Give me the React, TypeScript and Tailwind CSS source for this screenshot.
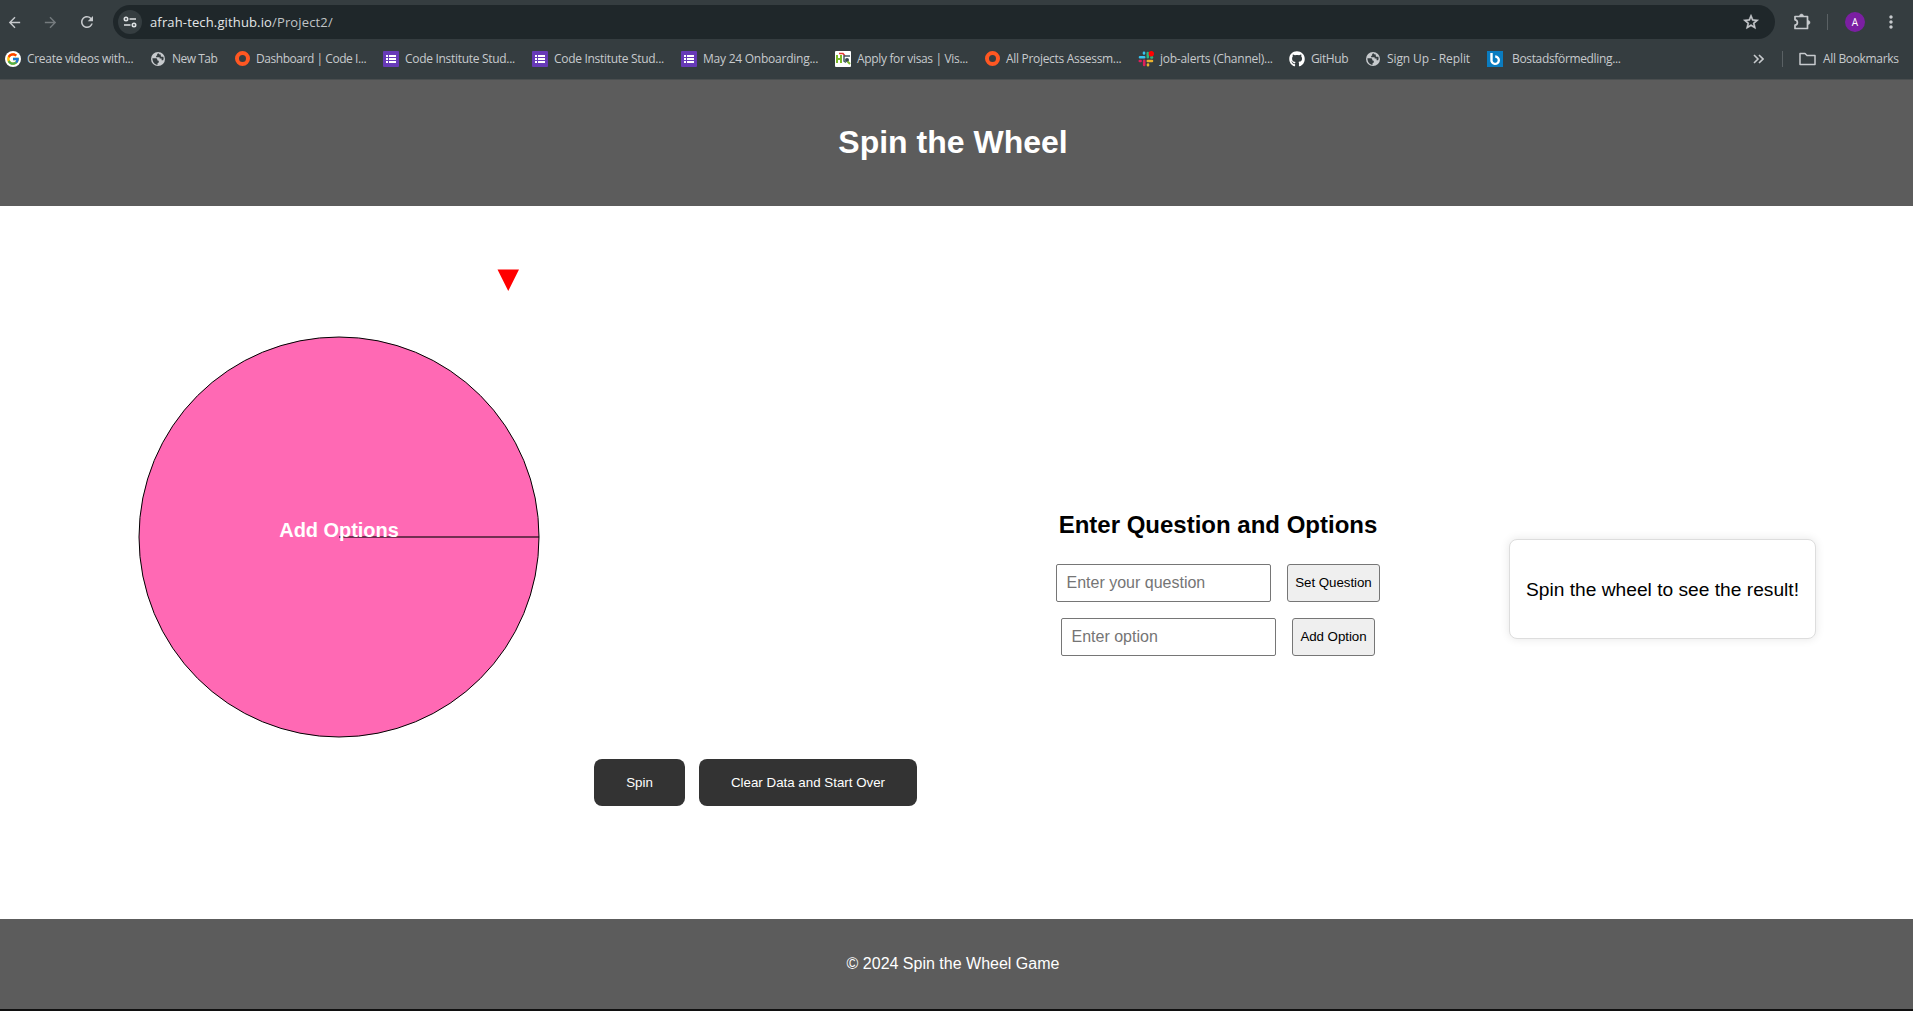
import React from "react";
import { FaGithub } from "react-icons/fa";
import { FcGoogle } from "react-icons/fc";
import { MdArrowBack, MdArrowForward, MdRefresh, MdStarOutline, MdMoreVert } from "react-icons/md";

function GoogleIcon() {
  return (
    <span className="flex h-4 w-4 items-center justify-center rounded-full bg-white">
      <FcGoogle size={14} />
    </span>
  );
}

function GlobeIcon() {
  return (
    <svg className="h-4 w-4" viewBox="0 0 16 16">
      <circle cx="8" cy="8" r="7" fill="#c7cacd" />
      <path d="M2.4 7.2h3.2c1.3 0 1.7.7 1.7 1.5s.6 1 1.5 1v1.4c0 .7-.6 1-1.2 1v1.7C4.800 13.600 2.400 11 2.400 7.200z" fill="#353d40" />
      <path d="M8.600 2.300c-.9.200-1.500.7-1.500 1.400v1h-1v1.600h3.500v1.200h2v1.800h1.500c.6-1 .7-2.500.2-3.600h-1.500c-.7 0-1-.4-1-1V3.600c-1.300 0-2-.5-2.200-1.300z" fill="#353d40" />
    </svg>
  );
}

function RingIcon() {
  return <span className="h-[15px] w-[15px] rounded-full border-4 border-[#ff5722]" />;
}

function ListIcon() {
  return (
    <svg className="h-4 w-4" viewBox="0 0 16 16">
      <rect width="16" height="16" rx="1" fill="#673ab7" />
      <path d="M3 4h2v2H3zM6 4h7v2H6zM3 7h2v2H3zM6 7h7v2H6zM3 10h2v2H3zM6 10h7v2H6z" fill="#fff" />
    </svg>
  );
}

function VisaIcon() {
  return (
    <svg className="h-4 w-4" viewBox="0 0 16 16" fill="none">
      <rect width="16" height="16" rx="1" fill="#fff" />
      <path d="M2 4v8M6 4v8M2 8h4" stroke="#7cb928" strokeWidth="2" />
      <path d="M4 2.500h4l2 2.500" stroke="#e53935" strokeWidth="1.600" />
      <path d="M15 5H9v5l2 1.500" stroke="#455a64" strokeWidth="1.500" />
      <circle cx="12" cy="9" r="2" fill="#37474f" />
      <path d="M12.500 10.500l2.500 2.500" stroke="#7cb928" strokeWidth="2" />
    </svg>
  );
}

function SlackIcon() {
  return (
    <svg className="h-4 w-4" viewBox="0 0 16 16" fill="none" strokeLinecap="round" strokeWidth="2.600">
      <path d="M2 6.200h4.200M6 1.800v.6" stroke="#36c5f0" />
      <path d="M9.800 2v4.200M14 6.400h-.6" stroke="#2eb67d" />
      <path d="M14 10h-4.200M10 14.200v-.6" stroke="#ecb22e" />
      <path d="M6.200 14v-4.200M1.800 10h.8" stroke="#e01e5a" />
      <circle cx="13.300" cy="2.800" r="2.700" fill="#f00" />
    </svg>
  );
}

function BostadIcon() {
  return (
    <svg className="h-4 w-4" viewBox="0 0 16 16" fill="none">
      <rect width="16" height="16" fill="#0a7cc0" />
      <path d="M4.500 2v6.500a3.700 3.700 0 1 0 3.700-3" stroke="#fff" strokeWidth="2.400" />
    </svg>
  );
}

const bookmarks = [
  { label: "Create videos with...", icon: <GoogleIcon />, box: "w-[145px]", text: "tracking-[-0.3px]" },
  { label: "New Tab", icon: <GlobeIcon />, box: "w-[84px]", text: "tracking-[-0.5px]" },
  { label: "Dashboard | Code I...", icon: <RingIcon />, box: "w-[149px]", text: "tracking-[-0.45px]" },
  { label: "Code Institute Stud...", icon: <ListIcon />, box: "w-[149px]", text: "tracking-[-0.3px]" },
  { label: "Code Institute Stud...", icon: <ListIcon />, box: "w-[149px]", text: "tracking-[-0.3px]" },
  { label: "May 24 Onboarding...", icon: <ListIcon />, box: "w-[154px]", text: "tracking-[-0.24px]" },
  { label: "Apply for visas | Vis...", icon: <VisaIcon />, box: "w-[149px]", text: "tracking-[-0.34px]" },
  { label: "All Projects Assessm...", icon: <RingIcon />, box: "w-[154px]", text: "tracking-[-0.31px]" },
  { label: "job-alerts (Channel)...", icon: <SlackIcon />, box: "w-[151px]", text: "tracking-[-0.25px]" },
  { label: "GitHub", icon: <FaGithub size={16} color="#fff" />, box: "w-[76px]", text: "tracking-[-0.42px]" },
  { label: "Sign Up - Replit", icon: <GlobeIcon />, box: "w-[122px]", text: "tracking-[-0.1px]" },
  { label: "Bostadsförmedling...", icon: <BostadIcon />, box: "w-[150px]", text: "ml-[3px] tracking-[-0.34px]" },
];

function BrowserBar() {
  return (
    <div className="h-20 border-b border-[#4a4e4f] bg-[#353d40] font-['Open_Sans',sans-serif] text-[#c7cacd]">
      <div className="flex h-[44px] items-center">
        <MdArrowBack size={17} className="ml-[6px]" />
        <MdArrowForward size={17} className="ml-[19px] text-[#757b7e]" />
        <MdRefresh size={18} className="ml-[19px]" />
        <div className="ml-[17px] flex h-[34px] w-[1662px] items-center rounded-full bg-[#1f272a] pl-[5px] pr-[15px]">
          <span className="flex h-6 w-6 items-center justify-center rounded-full bg-[#353d40]">
            <svg className="h-[14px] w-[14px]" viewBox="0 0 14 14" fill="none" stroke="#dfe2e4" strokeWidth="1.600">
              <circle cx="3" cy="4" r="1.700" />
              <path d="M6.500 4H13M1 10h6.500" />
              <circle cx="11" cy="10" r="1.700" />
            </svg>
          </span>
          <span className="ml-2 pt-px text-[13px] tracking-[0.14px] text-[#e3e6e8]">
            afrah-tech.github.io<span className="text-[#c0c4c6]">/Project2/</span>
          </span>
          <MdStarOutline size={18} className="ml-auto" stroke="#c7cacd" strokeWidth={0.7} />
        </div>
        <svg className="ml-[18px] h-[18px] w-[18px]" viewBox="0 0 18 18" fill="none" stroke="#c7cacd" strokeWidth="1.700" strokeLinejoin="round">
          <path d="M2 3.500h12.500v12H2v-3.300c3.200-.4 3.200-5 0-5.400z" />
          <path d="M6.500 3a2 2 0 0 1 4 0zM15 7.500a2 2 0 0 1 0 4z" fill="#c7cacd" strokeWidth=".5" />
        </svg>
        <span className="ml-[16px] h-4 w-px bg-[#5a6164]" />
        <span className="ml-[17px] flex h-5 w-5 items-center justify-center rounded-full bg-[#7b1fa2] text-[10px] text-white">A</span>
        <MdMoreVert size={20} className="ml-[16px]" />
      </div>
      <div className="flex h-[29px] items-center pl-[5px] text-[12px]">
        {bookmarks.map((b, i) => (
          <div key={i} className={`flex shrink-0 items-center ${b.box}`}>
            <span className="mr-[6px] flex w-4 shrink-0 justify-center">{b.icon}</span>
            <span className={`whitespace-nowrap ${b.text}`}>{b.label}</span>
          </div>
        ))}
        <svg className="ml-[116px] h-[10px] w-[11px]" viewBox="0 0 11 10" fill="none" stroke="#c7cacd" strokeWidth="1.600">
          <path d="M1 1l4 4-4 4M6 1l4 4-4 4" />
        </svg>
        <span className="ml-[18px] h-4 w-px bg-[#5a6164]" />
        <svg className="ml-[16px] h-[14px] w-[17px]" viewBox="0 0 17 14" fill="none" stroke="#c7cacd" strokeWidth="1.500" strokeLinejoin="round">
          <path d="M1 1.500h5l2 2h8v9H1z" />
        </svg>
        <span className="ml-[7px] whitespace-nowrap tracking-[-0.34px]">All Bookmarks</span>
      </div>
    </div>
  );
}

function Wheel() {
  return (
    <svg className="h-[402px] w-[402px]" viewBox="0 0 402 402">
      <circle cx="201" cy="201" r="200" fill="#ff69b4" stroke="#000" />
      <path d="M201 201h200" stroke="#000" strokeOpacity=".55" strokeWidth="2" />
      <text x="201" y="200.500" textAnchor="middle" textLength="119.500" fill="#fff" className="font-['Liberation_Sans',sans-serif] text-[20px] font-bold">
        Add Options
      </text>
    </svg>
  );
}

function FormRow({ placeholder, action, width }: { placeholder: string; action: string; width: string }) {
  return (
    <div className="flex gap-4">
      <input
        placeholder={placeholder}
        className="h-[38px] w-[215px] rounded-[2px] border border-[#767676] bg-white pl-[9.500px] text-base placeholder:text-[#757575]"
      />
      <button className={`h-[38px] whitespace-nowrap rounded-[3px] border border-[#767676] bg-[#efefef] text-[13.333px] tracking-[-0.05px] text-black ${width}`}>
        {action}
      </button>
    </div>
  );
}

export default function App() {
  return (
    <div className="h-[1011px] w-full overflow-hidden bg-[#101010] font-['Liberation_Sans',Arial,sans-serif] text-black">
      <BrowserBar />
      <header className="flex h-[126px] items-center justify-center bg-[#5c5c5c] pb-[2px] pr-[7px]">
        <h1 className="text-[32px] font-bold leading-9 text-white">Spin the Wheel</h1>
      </header>
      <main className="flex h-[713px] bg-white">
        <section className="flex w-[917px] flex-col pt-[63px]">
          <svg className="ml-[497px] h-[22px] w-[22px]" viewBox="0 0 22 22">
            <path d="M.5.500h21.500L11.250 22z" fill="#f00" />
          </svg>
          <div className="ml-[138px] mt-[45px]">
            <Wheel />
          </div>
          <div className="mt-[21px] flex justify-end gap-[14px] text-[13.333px] text-white">
            <button className="h-[47px] w-[91px] rounded-lg bg-[#333]">Spin</button>
            <button className="h-[47px] w-[218px] rounded-lg bg-[#333]">Clear Data and Start Over</button>
          </div>
        </section>
        <section className="ml-[139px] flex w-[324px] flex-col items-center pt-[305px]">
          <h2 className="whitespace-nowrap text-2xl font-bold leading-7">Enter Question and Options</h2>
          <div className="mt-[25px] flex flex-col items-center gap-4">
            <FormRow placeholder="Enter your question" action="Set Question" width="w-[93px]" />
            <FormRow placeholder="Enter option" action="Add Option" width="w-[83px]" />
          </div>
        </section>
        <section className="ml-[129px] mt-[333px] flex h-[100px] w-[307px] items-center justify-center rounded-lg border border-[#ddd] bg-white pt-[2px] shadow-[0_0_10px_rgba(0,0,0,0.1)]">
          <p className="whitespace-nowrap text-[19.2px]">Spin the wheel to see the result!</p>
        </section>
      </main>
      <footer className="flex h-[90px] items-center justify-center bg-[#5c5c5c] pr-[7px] text-base text-white">
        © 2024 Spin the Wheel Game
      </footer>
    </div>
  );
}
